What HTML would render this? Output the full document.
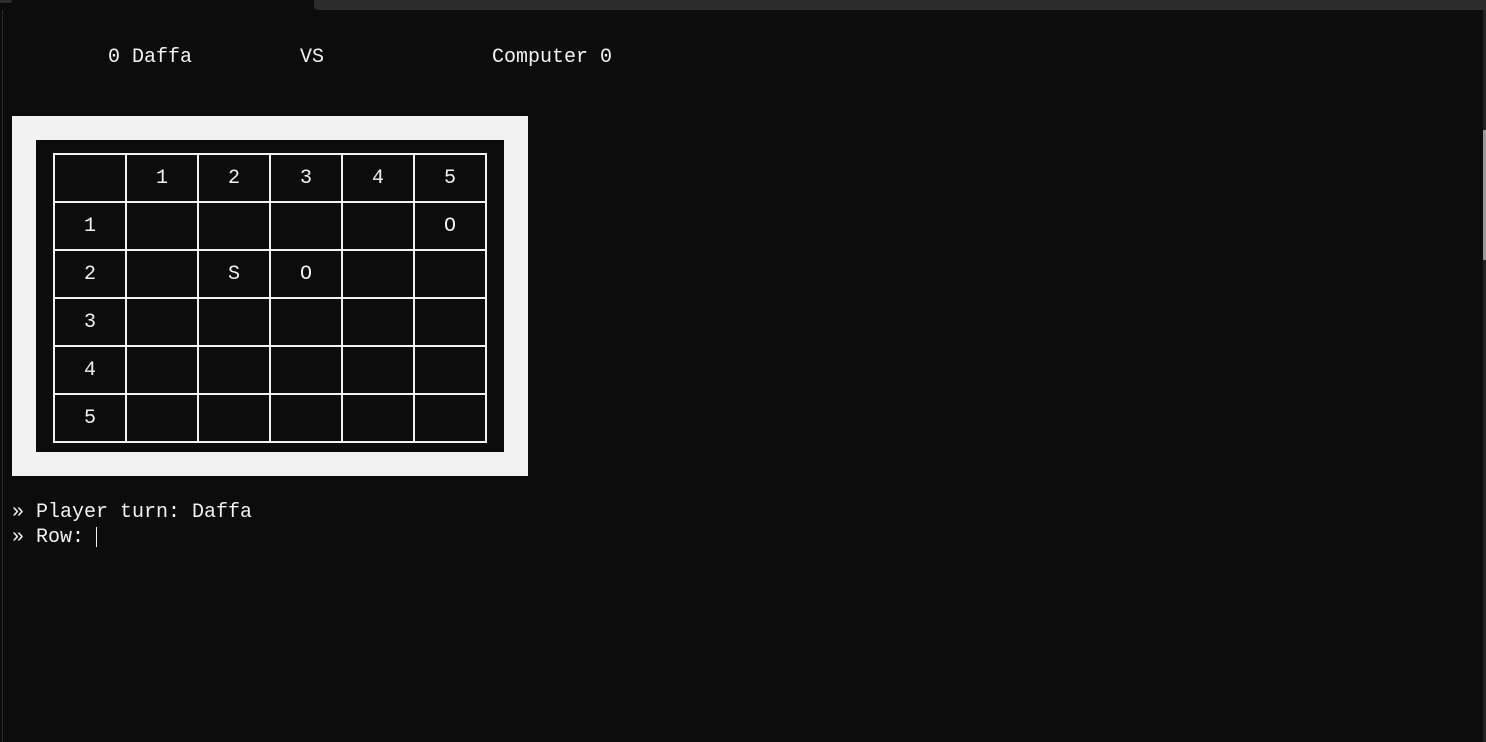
<!DOCTYPE html>
<html><head><meta charset="utf-8"><style>
html,body{margin:0;padding:0;width:1486px;height:742px;overflow:hidden;background:#0c0c0c;}
body{position:relative;font-family:"Liberation Mono","DejaVu Sans Mono",monospace;font-size:20px;color:#f2f2f2;}
.t{position:absolute;white-space:pre;line-height:24px;}
</style></head><body>
<div style="position:absolute;left:314px;top:0;width:1172px;height:10px;background:#2c2c2c;border-bottom-left-radius:4px"></div>
<div style="position:absolute;left:0;top:0;width:12px;height:3px;background:#2c2c2c;border-bottom-right-radius:3px"></div>
<div style="position:absolute;left:2px;top:10px;width:1px;height:732px;background:#2a2a2a"></div>
<div style="position:absolute;left:1483px;top:10px;width:3px;height:732px;background:#222"></div>
<div style="position:absolute;left:1483px;top:130px;width:3px;height:130px;background:#9a9a9a"></div>
<div class="t" style="left:108px;top:46px">0 Daffa</div>
<div class="t" style="left:300px;top:46px">VS</div>
<div class="t" style="left:492px;top:46px">Computer 0</div>
<svg style="position:absolute;left:0;top:0" width="560" height="490">
<rect x="12" y="116" width="516" height="360" fill="#f2f2f2"/>
<rect x="36" y="140" width="468" height="312" fill="#0c0c0c"/>
<g fill="#f2f2f2">
<rect x="53" y="153" width="2" height="290"/><rect x="125" y="153" width="2" height="290"/>
<rect x="197" y="153" width="2" height="290"/><rect x="269" y="153" width="2" height="290"/>
<rect x="341" y="153" width="2" height="290"/><rect x="413" y="153" width="2" height="290"/>
<rect x="485" y="153" width="2" height="290"/>
<rect x="53" y="153" width="434" height="2"/><rect x="53" y="201" width="434" height="2"/>
<rect x="53" y="249" width="434" height="2"/><rect x="53" y="297" width="434" height="2"/>
<rect x="53" y="345" width="434" height="2"/><rect x="53" y="393" width="434" height="2"/>
<rect x="53" y="441" width="434" height="2"/>
</g>
<g fill="#f2f2f2" font-family="Liberation Mono, DejaVu Sans Mono, monospace" font-size="20" text-anchor="middle">
<text x="162" y="183">1</text><text x="234" y="183">2</text><text x="306" y="183">3</text><text x="378" y="183">4</text><text x="450" y="183">5</text>
<text x="90" y="231">1</text><text x="90" y="279">2</text><text x="90" y="327">3</text><text x="90" y="375">4</text><text x="90" y="423">5</text>
<text x="450" y="231">O</text><text x="234" y="279">S</text><text x="306" y="279">O</text>
</g>
</svg>
<div class="t" style="left:12px;top:501px">» Player turn: Daffa</div>
<div class="t" style="left:12px;top:526px">» Row: </div>
<div style="position:absolute;left:96px;top:527px;width:1px;height:20px;background:#f2f2f2"></div>
</body></html>
